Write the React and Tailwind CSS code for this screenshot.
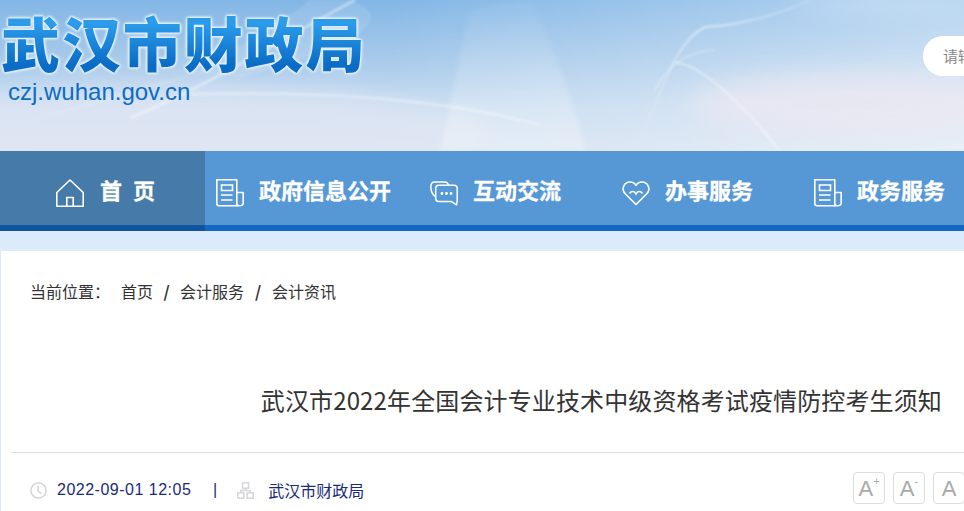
import React from "react";

const cjk = "font-['Noto_Sans_CJK_SC','Microsoft_YaHei',sans-serif]";

// sky picture behind the logo, the streaks are drawn by hand
function SkyArt() {
  return (
    <svg className="absolute inset-0 h-full w-full" viewBox="0 0 964 151" preserveAspectRatio="none" fill="none">
      <defs>
        <linearGradient id="side" x1="0" y1="0" x2="1" y2="0">
          <stop offset="0.4" stopColor="#ffffff" stopOpacity="0" />
          <stop offset="1" stopColor="#ffffff" stopOpacity="0.42" />
        </linearGradient>
        <linearGradient id="veil" x1="0" y1="0" x2="0" y2="1">
          <stop offset="0" stopColor="#ffffff" stopOpacity="0.03" />
          <stop offset="1" stopColor="#ffffff" stopOpacity="0.3" />
        </linearGradient>
        <linearGradient id="streak" x1="0" y1="1" x2="1" y2="0">
          <stop offset="0" stopColor="#ffffff" stopOpacity="0" />
          <stop offset="0.6" stopColor="#ffffff" stopOpacity="0.5" />
          <stop offset="1" stopColor="#ffffff" stopOpacity="0.1" />
        </linearGradient>
        <filter id="soft"><feGaussianBlur stdDeviation="1" /></filter>
        <filter id="mid"><feGaussianBlur stdDeviation="2.5" /></filter>
        <filter id="softer" x="-50%" y="-200%" width="200%" height="500%"><feGaussianBlur stdDeviation="12" /></filter>
      </defs>
      <rect width="964" height="151" fill="url(#side)" />
      <ellipse cx="170" cy="135" rx="320" ry="50" fill="#e6e9f4" opacity="0.6" filter="url(#softer)" />
      <ellipse cx="860" cy="105" rx="170" ry="32" fill="#ece8f2" opacity="0.75" filter="url(#softer)" />
      <ellipse cx="880" cy="2" rx="90" ry="5" fill="#ffffff" opacity="0.5" filter="url(#softer)" />
      <path d="M470 10 Q510 0 530 0 C550 40 570 90 586 151 L440 151 Z" fill="url(#veil)" filter="url(#mid)" />
      <path d="M0 125 C90 110 180 60 240 78 C300 60 420 25 350 0 L310 0 C280 25 230 50 190 76 C120 100 60 115 0 125 Z" fill="#ffffff" opacity="0.1" filter="url(#soft)" />
      <path d="M130 118 C210 85 280 40 355 0" stroke="#ffffff" strokeOpacity="0.38" strokeWidth="3" filter="url(#soft)" />
      <path d="M190 94 C300 92 430 95 540 125" stroke="#ffffff" strokeOpacity="0.3" strokeWidth="3" filter="url(#soft)" />
      <path d="M640 140 C665 85 675 42 705 27 C745 25 785 12 810 0" stroke="url(#streak)" strokeWidth="2" filter="url(#soft)" />
      <path d="M675 62 C700 65 740 100 780 151" stroke="#ffffff" strokeOpacity="0.4" strokeWidth="2" filter="url(#soft)" />
      <path d="M655 90 C670 60 690 52 715 50" stroke="#ffffff" strokeOpacity="0.25" strokeWidth="2" filter="url(#soft)" />
    </svg>
  );
}

function HomeIcon() {
  return (
    <svg width="28" height="28" viewBox="0 0 28 28" fill="none" stroke="#fff" strokeWidth="1.6" className="shrink-0">
      <path d="M0.8 13.5 L14 1 L27.2 13.5 V27.2 H0.8 Z" strokeLinejoin="round" />
      <path d="M10.8 27 V18.5 H17.2 V27" />
    </svg>
  );
}

function PaperIcon() {
  return (
    <svg width="28" height="28" viewBox="0 0 28 28" fill="none" stroke="#fff" strokeWidth="1.6" className="shrink-0">
      <path d="M23 26.8 H3 Q0.8 26.8 0.8 24.6 V0.8 H20.8 V24.6 Q20.8 26.8 23 26.8 Q27.2 26.8 27.2 24 V13.5 H21" strokeLinejoin="round" />
      <path d="M5.5 6 H16.5 V11.5 H5.5 Z M5 16 H16.5 M5 21 H16.5" />
    </svg>
  );
}

function ChatIcon() {
  return (
    <svg width="28" height="28" viewBox="0 0 28 28" fill="none" stroke="#fff" strokeWidth="1.5" className="shrink-0">
      <path d="M5.5 18 Q0.8 14 0.8 8 Q0.8 3 4.5 3 H15 Q17.5 3 18.5 6" strokeLinejoin="round" />
      <path d="M8.5 6.2 H24 Q27.2 6.2 27.2 9.5 V21 Q27.2 22.5 26.5 25.8 L21.5 22.6 H9 Q5.7 22.6 5.7 19.5 V9.5 Q5.7 6.2 8.5 6.2 Z" strokeLinejoin="round" />
      <circle cx="12" cy="14.5" r="0.7" fill="#fff" />
      <circle cx="16.5" cy="14.5" r="0.7" fill="#fff" />
      <circle cx="21" cy="14.5" r="0.7" fill="#fff" />
    </svg>
  );
}

function HeartIcon() {
  return (
    <svg width="28" height="28" viewBox="0 0 28 28" fill="none" stroke="#fff" strokeWidth="1.6" className="shrink-0">
      <path d="M14 25.5 L3 14.5 C-1 10 2 3 8 3 C11 3 13 4.5 14 6.5 C15 4.5 17 3 20 3 C26 3 29 10 25 14.5 Z" strokeLinejoin="round" />
      <path d="M7.5 14.5 C9.5 11.5 12.5 12 14 15 C15.5 12 18.5 11.5 20.5 14.5" />
    </svg>
  );
}

function ClockIcon() {
  return (
    <svg width="17" height="17" viewBox="0 0 17 17" fill="none" stroke="#d6d6d6" strokeWidth="1.5" className="shrink-0">
      <circle cx="8.5" cy="8.5" r="7.6" />
      <path d="M8 3.5 V9 L11.5 12" />
    </svg>
  );
}

function OrgIcon() {
  return (
    <svg width="17" height="17" viewBox="0 0 17 17" fill="none" stroke="#d6d6dc" strokeWidth="1.5" className="block shrink-0">
      <rect x="5.5" y="0.8" width="6" height="5.4" />
      <rect x="0.8" y="10.8" width="6" height="5.4" />
      <rect x="10.2" y="10.8" width="6" height="5.4" />
      <path d="M8.5 6 V8.5 M3.8 10.8 V8.5 H13.2 V10.8" />
    </svg>
  );
}

function FontButton({ sign }) {
  return (
    <div className="flex h-8 w-8 shrink-0 items-start justify-center rounded border border-[#dddddd] pt-[3px] font-['Liberation_Sans',sans-serif] text-[22px] leading-[26px] text-[#a9a9a9]">
      A
      {sign && <span className="-mt-[3px] text-[11px] leading-4">{sign}</span>}
    </div>
  );
}

const navItems = [
  { label: "政府信息公开", icon: <PaperIcon />, gap: "ml-[11px]" },
  { label: "互动交流", icon: <ChatIcon />, gap: "ml-[39px]" },
  { label: "办事服务", icon: <HeartIcon />, gap: "ml-[61px]" },
  { label: "政务服务", icon: <PaperIcon />, gap: "ml-[61px]" },
];

export default function App() {
  return (
    <div className={`h-[511px] w-[964px] overflow-hidden bg-[#dcebfc] ${cjk}`}>
      <header className="relative h-[151px] overflow-hidden bg-[linear-gradient(180deg,#82b6e6_0%,#a4c8ea_35%,#c6dbf0_70%,#d6e3f1_100%)]">
        <SkyArt />
        <div className="relative flex items-start justify-between">
          <div className="pl-[1px] pt-[7px]">
            <h1 className="h-[68px] bg-[linear-gradient(180deg,#2b9bea_25%,#0a6cc6_85%)] bg-clip-text text-[59px] font-black leading-[70px] tracking-[1.9px] whitespace-nowrap text-transparent [filter:drop-shadow(0_0_1px_#e8f2fb)_drop-shadow(0_0_1px_#e8f2fb)_drop-shadow(0_0_1px_#e8f2fb)]">
              武汉市财政局
            </h1>
            <p className="pl-[7px] pt-[3px] font-['Liberation_Sans',sans-serif] text-[24px] leading-[28px] text-[#0b6cc4]">
              czj.wuhan.gov.cn
            </p>
          </div>
          <div className="mt-[36px] h-10 w-[200px] shrink-0 -mr-[159px] rounded-l-[20px] bg-white pl-5 text-[15px] leading-10 whitespace-nowrap text-[#888888]">
            请输入关键字
          </div>
        </div>
      </header>

      <nav className="flex h-[80px] border-b-[6px] border-[#1368c2] bg-[#5698d5] text-[22px] font-bold whitespace-nowrap text-white">
        <a className="-mb-[6px] flex h-[80px] w-[205px] shrink-0 items-start gap-4 border-b-[6px] border-[#0e55a0] bg-[#457aa9] pl-[56px] pt-[28px]">
          <HomeIcon />
          <span className="-mt-[2px] tracking-[11px] leading-[24px] [-webkit-text-stroke:0.3px_white]">首页</span>
        </a>
        {navItems.map((item) => (
          <a key={item.label} className={`flex shrink-0 items-start gap-[15px] pt-[28px] ${item.gap}`}>
            {item.icon}
            <span className="-mt-[2px] leading-[24px] [-webkit-text-stroke:0.3px_white]">{item.label}</span>
          </a>
        ))}
      </nav>

      <main className="ml-px mt-5 h-[260px] bg-white">
        <div className="flex items-center whitespace-nowrap pl-[29px] pt-[28px] text-base leading-6 text-[#333333]">
          <span className="w-[91px]">当前位置：</span>
          <span>首页</span>
          <span className="w-[27px] text-center font-bold">/</span>
          <span>会计服务</span>
          <span className="w-[28px] text-center font-bold">/</span>
          <span>会计资讯</span>
        </div>
        <h2 className="mt-[81px] flex justify-end whitespace-nowrap pr-[22px] text-2xl font-normal leading-8 tracking-[0.13px] text-[#333333]">
          武汉市2022年全国会计专业技术中级资格考试疫情防控考生须知
        </h2>
        <div className="ml-[10px] mt-[36px] h-px bg-[#e0e0e0]" />
        <div className="flex items-center pl-[29px] pt-[21px]">
          <ClockIcon />
          <span className="ml-[10px] w-[134px] font-['Liberation_Sans',sans-serif] text-base leading-8 tracking-[0.5px] whitespace-nowrap text-[#1a2a7c]">2022-09-01 12:05</span>
          <span className="ml-[22px] font-['Liberation_Sans',sans-serif] text-base text-[#1a2a7c]">|</span>
          <span className="ml-5"><OrgIcon /></span>
          <span className="ml-[14px] text-[16px] leading-8 whitespace-nowrap text-[#1a2a7c]">武汉市财政局</span>
          <div className="-mr-px -mt-1 ml-auto flex gap-2">
            <FontButton sign="+" />
            <FontButton sign="-" />
            <FontButton />
          </div>
        </div>
      </main>
    </div>
  );
}
